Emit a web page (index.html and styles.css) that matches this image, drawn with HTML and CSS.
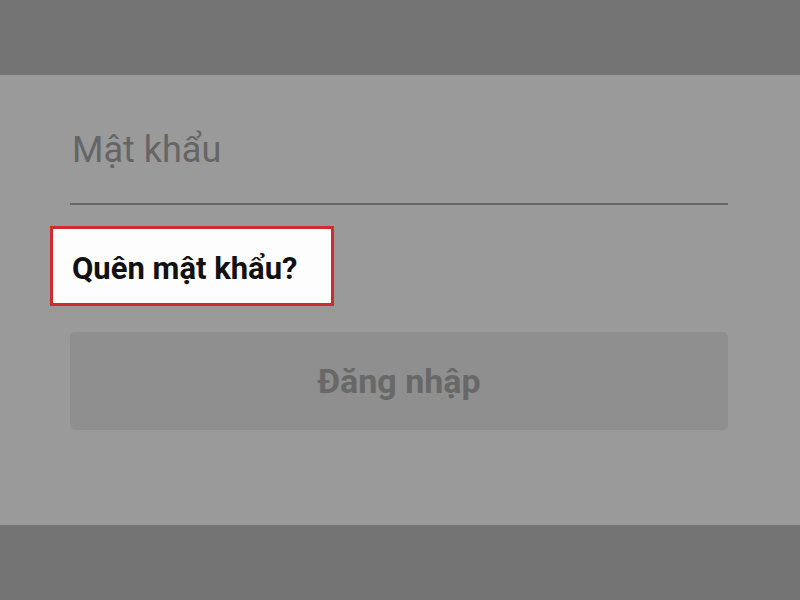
FILE: index.html
```html
<!DOCTYPE html>
<html lang="vi">
<head>
<meta charset="utf-8">
<link rel="stylesheet" href="styles.css">
</head>
<body>
<div class="band"></div>
<main class="panel">
  <div class="field">Mật khẩu</div>
  <div class="forgot">Quên mật khẩu?</div>
  <div class="login">Đăng nhập</div>
</main>
<div class="band"></div>
</body>
</html>
```
FILE: styles.css
```css
html, body {
  margin: 0;
  padding: 0;
  width: 800px;
  height: 600px;
  overflow: hidden;
  background: #9a9a9a;
  font-family: Roboto, "Liberation Sans", sans-serif;
}
.band {
  height: 75px;
  background: #747474;
}
.panel {
  height: 450px;
  box-sizing: border-box;
  padding: 0 72px 0 70px;
  display: flex;
  flex-direction: column;
  align-items: stretch;
}
.field {
  height: 40px;
  padding: 55px 0 33px 2px;
  border-bottom: 2px solid #666666;
  line-height: 40px;
  font-size: 36px;
  color: #656565;
}
.forgot {
  align-self: flex-start;
  margin: 21px 0 0 -20px;
  width: 284px;
  box-sizing: border-box;
  height: 80px;
  border: 3px solid #cf2b30;
  background: #fdfdfd;
  padding: 6px 0 0 19px;
  line-height: 68px;
  font-size: 31px;
  font-weight: 700;
  color: #111111;
}
.login {
  margin-top: 26px;
  height: 98px;
  border-radius: 5px;
  background: #8f8f8f;
  display: flex;
  align-items: center;
  justify-content: center;
  font-size: 34px;
  font-weight: 700;
  color: #686868;
}
```
